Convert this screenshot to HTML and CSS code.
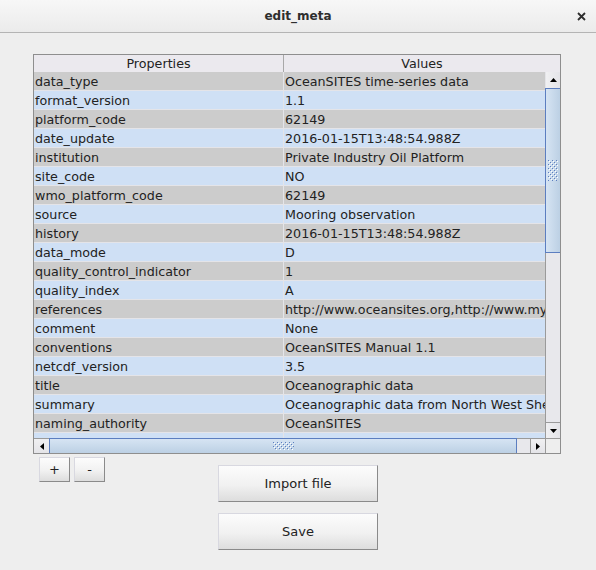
FILE: index.html
```html
<!DOCTYPE html>
<html>
<head>
<meta charset="utf-8">
<title>edit_meta</title>
<link rel="stylesheet" href="styles.css">
</head>
<body>
<div class="titlebar">
  <span class="title">edit_meta</span>
  <svg class="close" width="9" height="9" viewBox="0 0 9 9"><path d="M1 1L8 8M8 1L1 8" stroke="#2e2e2e" stroke-width="1.8" fill="none"/></svg>
</div>
<div class="content">
  <div class="frame">
    <div class="thead">
      <div class="th c1">Properties</div>
      <div class="th c2">Values</div>
    </div>
    <div class="tbody">
      <div class="rows">
        <div class="row g"><div class="cell c1">data_type</div><div class="cell c2">OceanSITES time-series data</div></div>
        <div class="row b"><div class="cell c1">format_version</div><div class="cell c2">1.1</div></div>
        <div class="row g"><div class="cell c1">platform_code</div><div class="cell c2">62149</div></div>
        <div class="row b"><div class="cell c1">date_update</div><div class="cell c2">2016-01-15T13:48:54.988Z</div></div>
        <div class="row g"><div class="cell c1">institution</div><div class="cell c2">Private Industry Oil Platform</div></div>
        <div class="row b"><div class="cell c1">site_code</div><div class="cell c2">NO</div></div>
        <div class="row g"><div class="cell c1">wmo_platform_code</div><div class="cell c2">62149</div></div>
        <div class="row b"><div class="cell c1">source</div><div class="cell c2">Mooring observation</div></div>
        <div class="row g"><div class="cell c1">history</div><div class="cell c2">2016-01-15T13:48:54.988Z</div></div>
        <div class="row b"><div class="cell c1">data_mode</div><div class="cell c2">D</div></div>
        <div class="row g"><div class="cell c1">quality_control_indicator</div><div class="cell c2">1</div></div>
        <div class="row b"><div class="cell c1">quality_index</div><div class="cell c2">A</div></div>
        <div class="row g"><div class="cell c1">references</div><div class="cell c2">http://www.oceansites.org,http://www.my.oceansites.org</div></div>
        <div class="row b"><div class="cell c1">comment</div><div class="cell c2">None</div></div>
        <div class="row g"><div class="cell c1">conventions</div><div class="cell c2">OceanSITES Manual 1.1</div></div>
        <div class="row b"><div class="cell c1">netcdf_version</div><div class="cell c2">3.5</div></div>
        <div class="row g"><div class="cell c1">title</div><div class="cell c2">Oceanographic data</div></div>
        <div class="row b"><div class="cell c1">summary</div><div class="cell c2">Oceanographic data from North West Shelf</div></div>
        <div class="row g"><div class="cell c1">naming_authority</div><div class="cell c2">OceanSITES</div></div>
        <div class="row b"><div class="cell c1">id</div><div class="cell c2">OS_62149</div></div>
      </div>
      <div class="vscroll">
        <div class="varrow up"><svg width="7" height="4" viewBox="0 0 7 4"><path d="M3.5 0L7 4H0Z" fill="#000"/></svg></div>
        <div class="vthumb">
          <svg width="10" height="21" viewBox="0 0 10 21"><rect width="10" height="21" fill="url(#bumps)"/></svg>
        </div>
        <div class="vtrack"></div>
        <div class="varrow down"><svg width="7" height="4" viewBox="0 0 7 4"><path d="M0 0H7L3.5 4Z" fill="#000"/></svg></div>
      </div>
    </div>
    <div class="hbar">
      <div class="harrow left"><svg width="4" height="7" viewBox="0 0 4 7"><path d="M0 3.5L4 0V7Z" fill="#000"/></svg></div>
      <div class="hthumb">
        <svg width="21" height="8" viewBox="0 0 21 8"><rect width="21" height="8" fill="url(#bumps)"/></svg>
      </div>
      <div class="htrack"></div>
      <div class="harrow right"><svg width="4" height="7" viewBox="0 0 4 7"><path d="M0 0L4 3.5L0 7Z" fill="#000"/></svg></div>
      <div class="corner"></div>
    </div>
  </div>
  <div class="bottom">
    <div class="pm">
      <button class="btn small">+</button>
      <button class="btn small">-</button>
    </div>
    <div class="actions">
      <button class="btn big">Import file</button>
      <button class="btn big">Save</button>
    </div>
  </div>
</div>
<svg class="defs" width="0" height="0">
  <defs>
    <pattern id="bumps" width="4" height="4" patternUnits="userSpaceOnUse">
      <rect x="0" y="0" width="1" height="1" fill="#5d7fc0"/>
      <rect x="2" y="2" width="1" height="1" fill="#5d7fc0"/>
      <rect x="1" y="1" width="1" height="1" fill="#ffffff"/>
      <rect x="3" y="3" width="1" height="1" fill="#ffffff"/>
    </pattern>
  </defs>
</svg>
</body>
</html>
```
FILE: styles.css
```css
html, body {
  margin: 0;
  padding: 0;
}
body {
  width: 596px;
  height: 570px;
  overflow: hidden;
  background: #eeeeee;
  font-family: "DejaVu Sans", sans-serif;
  font-size: 13px;
  color: #222;
}
.titlebar {
  height: 32px;
  border-bottom: 1px solid #b4b4b4;
  background: linear-gradient(#f7f7f7, #ebebeb);
  display: grid;
  grid-template-columns: 1fr auto 1fr;
  align-items: center;
}
.title {
  grid-column: 2;
  font-weight: bold;
  font-size: 12px;
  color: #2e2e2e;
}
.close {
  grid-column: 3;
  justify-self: end;
  margin-right: 10px;
}
.content {
  padding: 21px 0 0 33px;
}
.frame {
  width: 528px;
  height: 400px;
  box-sizing: border-box;
  border: 1px solid #8e8e8e;
  display: flex;
  flex-direction: column;
  background: #eeeeee;
}
.thead {
  height: 17px;
  display: flex;
  background: #ebe9ee;
  flex: none;
}
.th {
  line-height: 17px;
  text-align: center;
  white-space: nowrap;
  font-size: 12.7px;
}
.th.c1 {
  width: 249px;
  border-right: 1px solid #a8a8a8;
}
.th.c2 {
  flex: 1;
}
.tbody {
  height: 366px;
  display: flex;
  flex: none;
}
.rows {
  width: 511px;
  overflow: hidden;
}
.row {
  height: 19px;
  box-sizing: border-box;
  border-bottom: 1px solid #e4e4e8;
  display: flex;
}
.row.g { background: #cccccc; }
.row.b { background: #cfe0f5; }
.cell {
  height: 18px;
  line-height: 19px;
  font-size: 12.7px;
  white-space: nowrap;
  overflow: hidden;
  padding-left: 1px;
  box-sizing: border-box;
}
.cell.c1 {
  width: 250px;
  border-right: 1px solid #e4e4e8;
}
.cell.c2 {
  flex: 1;
  padding-left: 1px;
}
.vscroll {
  width: 15px;
  display: flex;
  flex-direction: column;
}
.varrow {
  height: 16px;
  flex: none;
  box-sizing: border-box;
  background: linear-gradient(90deg, #f0f0f2, #e4e4e8);
  display: flex;
  align-items: center;
  justify-content: center;
}
.varrow.up {
  border-left: 1px solid #e4e4e8;
}
.varrow.down {
  border-left: 1px solid #9a9a9a;
  border-top: 1px solid #9a9a9a;
}
.vthumb {
  height: 165px;
  flex: none;
  box-sizing: border-box;
  border: 1px solid #5c7ec0;
  border-right: none;
  background: linear-gradient(90deg, #d6e4f3, #bcd0e4);
  display: flex;
  align-items: center;
  justify-content: center;
}
.vtrack {
  flex: 1;
  background: #e8e8ec;
  border-left: 1px solid #9a9a9a;
}
.hbar {
  height: 15px;
  flex: none;
  display: flex;
}
.harrow {
  width: 15px;
  flex: none;
  box-sizing: border-box;
  background: linear-gradient(#f0f0f2, #e4e4e8);
  display: flex;
  align-items: center;
  justify-content: center;
  border-top: 1px solid #9a9a9a;
}
.harrow.right {
  border-left: 1px solid #9a9a9a;
}
.hthumb {
  width: 468px;
  flex: none;
  box-sizing: border-box;
  border: 1px solid #5c7ec0;
  border-bottom: none;
  background: linear-gradient(#d6e4f3, #bcd0e4);
  display: flex;
  align-items: center;
  justify-content: center;
}
.htrack {
  width: 13px;
  flex: none;
  background: #e8e8ec;
  border-top: 1px solid #9a9a9a;
}
.corner {
  width: 15px;
  flex: none;
  box-sizing: border-box;
  background: #eeeeee;
  border-top: 1px solid #9a9a9a;
  border-left: 1px solid #9a9a9a;
}
.bottom {
  display: grid;
  grid-template-columns: 1fr 160px 1fr;
  margin-left: -33px;
}
.pm {
  display: flex;
  gap: 4px;
  padding: 3px 0 0 39px;
  align-items: flex-start;
}
.actions {
  display: flex;
  flex-direction: column;
  gap: 11px;
  padding-top: 11px;
}
.btn {
  font-family: "DejaVu Sans", sans-serif;
  font-size: 13px;
  color: #222;
  box-sizing: border-box;
  border-top: 1px solid #d8d8e0;
  border-left: 1px solid #d8d8e0;
  border-right: 1px solid #8a8a8a;
  border-bottom: 1px solid #8a8a8a;
  background: linear-gradient(#fcfcfc, #f1f1f1 55%, #dddddd);
  padding: 0;
  margin: 0;
}
.btn.small {
  width: 31px;
  height: 25px;
}
.btn.big {
  width: 160px;
  height: 37px;
}
.defs {
  position: absolute;
  width: 0;
  height: 0;
}
```
